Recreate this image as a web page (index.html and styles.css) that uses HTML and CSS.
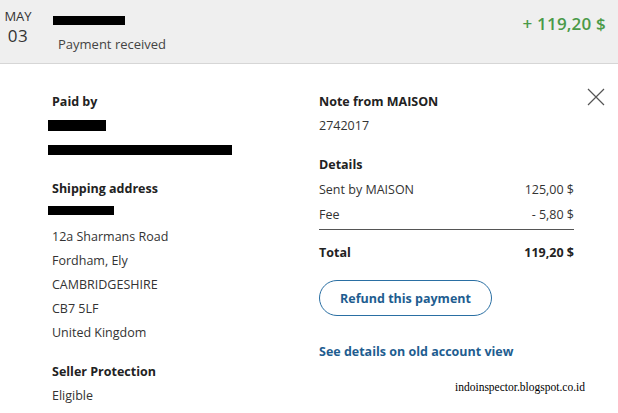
FILE: index.html
```html
<!DOCTYPE html>
<html>
<head>
<meta charset="utf-8">
<link rel="stylesheet" href="styles.css">
</head>
<body>
<div class="header">
  <div class="date">
    <div class="month">MAY</div>
    <div class="day">03</div>
  </div>
  <div class="who">
    <div class="redact r-head"></div>
    <div class="status">Payment received</div>
  </div>
  <div class="amount">+ 119,20 $</div>
</div>
<div class="detail">
  <div class="col left">
    <div class="title">Paid by</div>
    <div class="redact r1"></div>
    <div class="redact r2"></div>
    <div class="title t-ship">Shipping address</div>
    <div class="redact r3"></div>
    <div class="line">12a Sharmans Road</div>
    <div class="line">Fordham, Ely</div>
    <div class="line">CAMBRIDGESHIRE</div>
    <div class="line">CB7 5LF</div>
    <div class="line">United Kingdom</div>
    <div class="title t-seller">Seller Protection</div>
    <div class="line l-elig">Eligible</div>
  </div>
  <div class="col right">
    <div class="title">Note from MAISON</div>
    <div class="line l-note">2742017</div>
    <div class="title t-details">Details</div>
    <div class="row"><span>Sent by MAISON</span><span>125,00 $</span></div>
    <div class="row row-fee"><span>Fee</span><span>- 5,80 $</span></div>
    <div class="row row-total"><span>Total</span><span>119,20 $</span></div>
    <button class="refund">Refund this payment</button>
    <a class="oldview">See details on old account view</a>
    <div class="watermark">indoinspector.blogspot.co.id</div>
  </div>
  <svg class="close" width="18" height="18" viewBox="0 0 18 18"><path d="M1 1 L17 17 M17 1 L1 17" stroke="#555" stroke-width="1.2" fill="none"/></svg>
</div>
</body>
</html>
```
FILE: styles.css
```css
html, body { margin: 0; padding: 0; background: #fff; }
body { font-family: "Open Sans", "Noto Sans", sans-serif; color: #2c2e2f; width: 618px; height: 413px; overflow: hidden; }

.header {
  height: 63px;
  background: #efefef;
  border-bottom: 1px solid #d6d6d6;
  display: flex;
  align-items: flex-start;
  position: relative;
}
.date { width: 40px; padding-top: 8px; text-align: center; color: #333; }
.date .month { font-size: 13px; line-height: 16px; width: 36px; }
.date .day { font-size: 17px; line-height: 20px; width: 36px; margin-top: 2px; letter-spacing: 0.5px; }
.who { padding-left: 13px; padding-top: 16px; }
.r-head { width: 72px; height: 9px; }
.status { font-size: 13px; margin-top: 11px; margin-left: 5px; color: #444; line-height: 16px; }
.amount { margin-left: auto; margin-right: 12px; margin-top: 12px; font-size: 17px; color: #4a9a48; font-weight: 600; letter-spacing: 0.2px; }

.redact { background: #000; }

.detail { display: flex; padding-left: 52px; position: relative; }
.col { display: flex; flex-direction: column; min-width: 0; flex-shrink: 0; box-sizing: border-box; }
.left { width: 267px; padding-top: 29px; }
.right { width: 255px; padding-top: 29px; }
.title { font-weight: 700; font-size: 12.5px; line-height: 18px; color: #222; }
.line { font-size: 12.5px; line-height: 24px; color: #333; }
.r1 { width: 58px; height: 11px; margin-left: -4px; margin-top: 9px; }
.r2 { width: 184px; height: 10px; margin-left: -4px; margin-top: 14px; }
.t-ship { margin-top: 25px; }
.r3 { width: 66px; height: 9px; margin-left: -4px; margin-top: 8px; margin-bottom: 10px; }
.t-seller { margin-top: 18px; }
.l-elig { margin-top: 3px; }

.l-note { margin-top: 3px; }
.t-details { margin-top: 18px; margin-bottom: 3px; }
.row { display: flex; justify-content: space-between; font-size: 12.5px; line-height: 25px; color: #333; width: 255px; }
.row-fee { border-bottom: 1px solid #555; padding-bottom: 2px; }
.row-total { font-weight: 700; color: #222; margin-top: 10px; }
.refund {
  margin-top: 15px;
  width: 173px; height: 36px;
  border: 1px solid #2a6fa3;
  border-radius: 18px;
  background: #fff;
  color: #1e5d90;
  font-family: "Open Sans", "Noto Sans", sans-serif;
  font-weight: 700;
  font-size: 12.5px;
  padding: 0;
}
.oldview { margin-top: 27px; font-weight: 700; font-size: 12.5px; color: #1e5d90; line-height: 18px; }
.watermark { font-family: "Liberation Serif", serif; font-size: 11.5px; line-height: 14px; color: #000; margin-top: 19px; margin-left: 136px; white-space: nowrap; }

.close { position: absolute; left: 587px; top: 24px; }
```
